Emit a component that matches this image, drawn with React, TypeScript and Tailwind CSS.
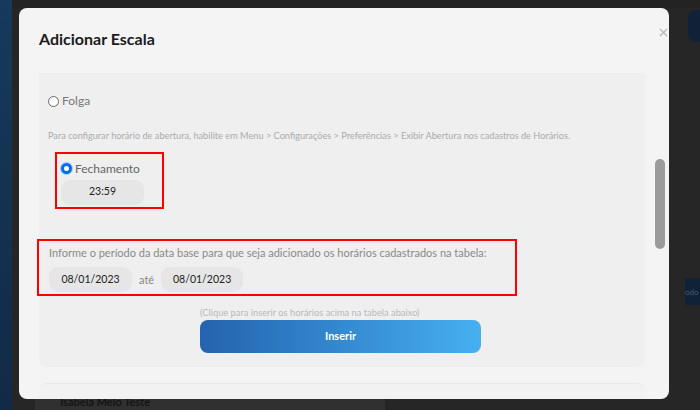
import { X } from "lucide-react";

// Campo de hora/data com fundo cinza
function Campo({ valor, largura }: { valor: string; largura: string }) {
  return (
    <div
      className={`${largura} h-[25px] rounded-[9px] bg-[#e6e6e6] flex items-center justify-center text-[10.5px] text-[#222]`}
    >
      {valor}
    </div>
  );
}

export default function App() {
  return (
    <div
      className="relative w-[700px] h-[410px] overflow-hidden bg-[#2b2b2b] flex"
      style={{ fontFamily: "Lato, 'Open Sans', sans-serif" }}
    >
      {/* ===================
          PÁGINA AO FUNDO
      =================== */}
      <aside className="w-[12px] h-full bg-gradient-to-b from-[#163a5c] to-[#112a47]" />
      <div className="flex-1 flex flex-col bg-[#262626]">
        <div className="h-[8px] bg-[#232323]" />
        <div className="flex justify-end pt-[2px]">
          <div className="w-[12px] h-[32px] rounded-l-[8px] bg-[#0f2238]" />
        </div>
        <div className="mt-[236px] flex justify-end">
          <div className="w-[15px] h-[27px] bg-[#0f2238] text-[8px] text-[#4a5b6c] flex items-center">
            odo
          </div>
        </div>
        <div className="mt-auto ml-[23px] w-[350px] h-[16px] bg-[#303030] pl-[25px] text-[11px] leading-[16px] text-[#151515] font-bold">
          Isabela Melo Teste
        </div>
      </div>

      {/* ===================
          MODAL
      =================== */}
      <div className="absolute left-[19px] top-[8px] w-[650px] h-[391px] rounded-[8px] bg-[#f4f4f4] flex flex-col">
        <div className="relative h-[65px] pl-[20px] flex items-center">
          <h1 className="text-[16px] font-bold text-[#1b1b1b] pb-[3px]">Adicionar Escala</h1>
          <X className="absolute right-[-1px] top-[18px] w-[13px] h-[13px] text-[#b5b5b5]" strokeWidth={2.2} />
        </div>

        <div className="flex">
          <div className="ml-[20px] w-[606px] h-[294px] rounded-b-[8px] bg-[#efefef] pl-[9px] flex flex-col">
            {/* Folga */}
            <label className="mt-[19px] flex items-center gap-[3px] text-[12px] text-[#777]">
              <span className="w-[11px] h-[11px] rounded-full border border-[#666] bg-white" />
              Folga
            </label>

            <p className="mt-[19px] text-[9.2px] text-[#ababab]">
              Para configurar horário de abertura, habilite em Menu &gt; Configurações &gt; Preferências &gt; Exibir Abertura nos cadastros de Horários.
            </p>

            {/* Fechamento */}
            <div className="mt-[9px] ml-[7px] w-[109px] h-[57px] border-2 border-[#ff0000] pl-[4px] pt-[6px] flex flex-col">
              <label className="flex items-center gap-[3px] text-[12px] text-[#666]">
                <span className="w-[11px] h-[11px] rounded-full border-[3px] border-[#0a6cf5] bg-white ring-1 ring-[#a9c8f5]" />
                Fechamento
              </label>
              <div className="mt-[2px]">
                <Campo valor="23:59" largura="w-[83px]" />
              </div>
            </div>

            {/* Período */}
            <div className="mt-[30px] ml-[-11px] w-[480px] h-[57px] border-2 border-[#ff0000] pl-[10px] pt-[4px]">
              <p className="text-[11px] text-[#8a8a8a]">
                Informe o período da data base para que seja adicionado os horários cadastrados na tabela:
              </p>
              <div className="mt-[6px] flex items-center">
                <Campo valor="08/01/2023" largura="w-[83px]" />
                <span className="mx-[7px] text-[11px] text-[#888]">até</span>
                <Campo valor="08/01/2023" largura="w-[82px]" />
              </div>
            </div>

            <p className="mt-[10px] ml-[152px] whitespace-nowrap text-[9.3px] text-[#b9b9b9]">
              (Clique para inserir os horários acima na tabela abaixo)
            </p>
            <button className="mt-0 ml-[152px] w-[281px] h-[33px] rounded-[8px] bg-gradient-to-r from-[#2563ae] to-[#46b0f0] text-white text-[11px] font-bold">
              Inserir
            </button>
          </div>

          {/* Barra de rolagem */}
          <div className="ml-[10px] mt-[86px] w-[10px] h-[90px] rounded-full bg-[#9b9b9b]" />
        </div>

        <div className="mt-[16px] ml-[20px] w-[606px] flex-1 rounded-t-[8px] border-t border-[#eaeaea] bg-[#f2f2f2]" />
      </div>
    </div>
  );
}
